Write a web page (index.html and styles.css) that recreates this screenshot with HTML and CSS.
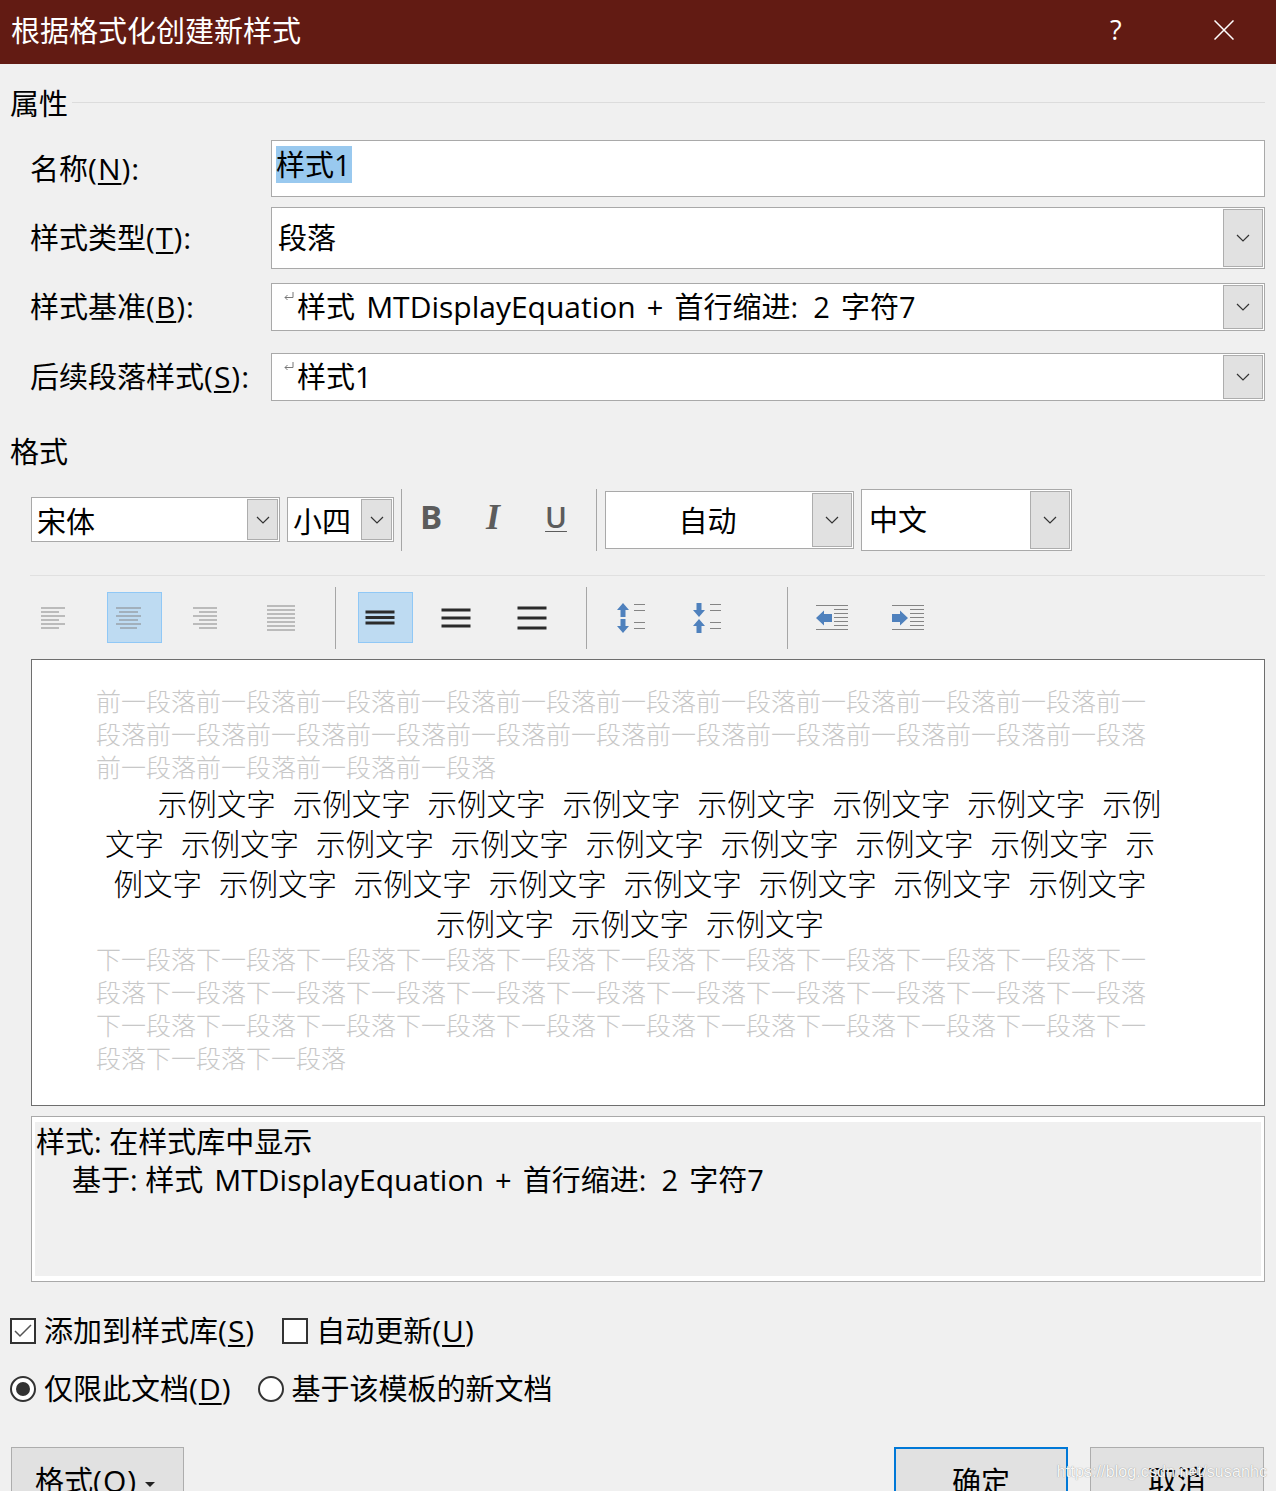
FILE: index.html
```html
<!DOCTYPE html>
<html lang="zh">
<head>
<meta charset="utf-8">
<title>根据格式化创建新样式</title>
<link rel="stylesheet" href="styles.css">
</head>
<body>
<div class="dialog">
  <header class="titlebar">
    <span class="title">根据格式化创建新样式</span>
    <span class="help">?</span>
    <svg class="close" width="20" height="20" viewBox="0 0 20 20"><path d="M.5.5 19.500 19.500M19.500.5.5 19.500" stroke="#fff" stroke-width="1.500" fill="none"/></svg>
  </header>

  <div class="section-head first"><span>属性</span><i></i></div>

  <div class="form">
    <div class="row r1"><label>名称<span class="lat">(<u>N</u>):</span></label>
      <div class="field name"><span class="sel">样式1</span></div></div>
    <div class="row r2"><label>样式类型<span class="lat">(<u>T</u>):</span></label>
      <div class="field combo"><span class="val v-plain">段落</span><b class="drop"><svg class="chev" viewBox="0 0 14 8"><path d="M1 1l6 6 6-6"/></svg></b></div></div>
    <div class="row r3"><label>样式基准<span class="lat">(<u>B</u>):</span></label>
      <div class="field combo"><svg class="para" width="10" height="9" viewBox="0 0 10 9"><path d="M9 0v5.500H1M3.500 3 1 5.500 3.500 8"/></svg><span class="val"><span class="eq">样式 <span class="eqname">MTDisplayEquation</span> + </span>首行缩进:&nbsp; <span class="eq">2 </span>字符7</span><b class="drop"><svg class="chev" viewBox="0 0 14 8"><path d="M1 1l6 6 6-6"/></svg></b></div></div>
    <div class="row r4"><label>后续段落样式<span class="lat">(<u>S</u>):</span></label>
      <div class="field combo"><svg class="para" width="10" height="9" viewBox="0 0 10 9"><path d="M9 0v5.500H1M3.500 3 1 5.500 3.500 8"/></svg><span class="val">样式1</span><b class="drop"><svg class="chev" viewBox="0 0 14 8"><path d="M1 1l6 6 6-6"/></svg></b></div></div>
  </div>

  <div class="section-head second"><span>格式</span></div>

  <div class="fontbar">
    <div class="field small font"><span class="val">宋体</span><b class="drop"><svg class="chev" viewBox="0 0 14 8"><path d="M1 1l6 6 6-6"/></svg></b></div>
    <div class="field small size"><span class="val">小四</span><b class="drop"><svg class="chev" viewBox="0 0 14 8"><path d="M1 1l6 6 6-6"/></svg></b></div>
    <i class="vsep s1"></i>
    <span class="fmt bold">B</span>
    <span class="fmt ital">I</span>
    <span class="fmt und">U</span>
    <i class="vsep s2"></i>
    <div class="field color"><span class="val center">自动</span><b class="drop"><svg class="chev" viewBox="0 0 14 8"><path d="M1 1l6 6 6-6"/></svg></b></div>
    <div class="field lang"><span class="val">中文</span><b class="drop"><svg class="chev" viewBox="0 0 14 8"><path d="M1 1l6 6 6-6"/></svg></b></div>
  </div>

  <div class="parabar">
    <span class="tool"><svg width="24" height="22" viewBox="0 0 24 22"><path d="M0 1h24M0 5h18M0 9h24M0 13h18M0 17h24M0 21h18"/></svg></span>
    <span class="tool on"><svg width="25" height="22" viewBox="0 0 25 22"><path d="M0 1h25M3 5h19M0 9h25M3 13h19M0 17h25M4 21h17"/></svg></span>
    <span class="tool"><svg width="24" height="22" viewBox="0 0 24 22"><path d="M0 1h24M6 5h18M0 9h24M6 13h18M0 17h24M6 21h18"/></svg></span>
    <span class="tool"><svg width="28" height="26" viewBox="0 0 28 26"><path d="M0 1h28M0 5h28M0 9h28M0 13h28M0 17h28M0 21h28M0 25h28"/></svg></span>
    <i class="vsep b1"></i>
    <span class="tool on"><svg width="30" height="15" viewBox="0 0 30 15"><path class="thick" d="M.5 2h29M.5 7.500h29M.5 13h29"/></svg></span>
    <span class="tool"><svg width="30" height="20" viewBox="0 0 30 20"><path class="thick" d="M.5 2h29M.5 10h29M.5 18h29"/></svg></span>
    <span class="tool"><svg width="30" height="24" viewBox="0 0 30 24"><path class="thick" d="M.5 2h29M.5 12h29M.5 22h29"/></svg></span>
    <i class="vsep b2"></i>
    <span class="tool"><svg width="28" height="30" viewBox="0 0 28 30"><path class="blue" d="M6 0l6 7H8.500v7h-5V7H0zM3.500 16h5v7H12l-6 7-6-7h3.500z"/><path d="M17 1.500h11M17 7.500h11M17 19.500h11M17 25.500h11"/></svg></span>
    <span class="tool"><svg width="28" height="30" viewBox="0 0 28 30"><path class="blue" d="M3.500 0h5v7H12l-6 7-6-7h3.500zM6 16l6 7H8.500v7h-5v-7H0z"/><path d="M17 1.500h11M17 7.500h11M17 19.500h11M17 25.500h11"/></svg></span>
    <i class="vsep b3"></i>
    <span class="tool"><svg width="32" height="25" viewBox="0 0 32 25"><path class="blue" d="M0 13l8-7.500V9h8v8H8v3.500z"/><path d="M0 .5h32M18 4.500h14M18 8.500h14M18 12.500h14M18 16.500h14M18 20.500h14M0 24.500h32"/></svg></span>
    <span class="tool"><svg width="32" height="25" viewBox="0 0 32 25"><path class="blue" d="M16 13L8 5.500V9H0v8h8v3.500z"/><path d="M0 .5h32M18 4.500h14M18 8.500h14M18 12.500h14M18 16.500h14M18 20.500h14M0 24.500h32"/></svg></span>
  </div>

  <div class="preview">
    <p class="ghost">前一段落前一段落前一段落前一段落前一段落前一段落前一段落前一段落前一段落前一段落前一<br>段落前一段落前一段落前一段落前一段落前一段落前一段落前一段落前一段落前一段落前一段落<br>前一段落前一段落前一段落前一段落</p>
    <p class="sample"><span class="l1">示例文字&nbsp;示例文字&nbsp;示例文字&nbsp;示例文字&nbsp;示例文字&nbsp;示例文字&nbsp;示例文字&nbsp;示例</span><br>文字&nbsp;示例文字&nbsp;示例文字&nbsp;示例文字&nbsp;示例文字&nbsp;示例文字&nbsp;示例文字&nbsp;示例文字&nbsp;示<br>例文字&nbsp;示例文字&nbsp;示例文字&nbsp;示例文字&nbsp;示例文字&nbsp;示例文字&nbsp;示例文字&nbsp;示例文字<br>示例文字&nbsp;示例文字&nbsp;示例文字</p>
    <p class="ghost after">下一段落下一段落下一段落下一段落下一段落下一段落下一段落下一段落下一段落下一段落下一<br>段落下一段落下一段落下一段落下一段落下一段落下一段落下一段落下一段落下一段落下一段落<br>下一段落下一段落下一段落下一段落下一段落下一段落下一段落下一段落下一段落下一段落下一<br>段落下一段落下一段落</p>
  </div>

  <div class="desc">
    <div class="desc-inner">
      <div>样式: 在样式库中显示</div>
      <div class="indent"><span>基于: </span><span class="eq">样式 <span class="eqname">MTDisplayEquation</span> + </span>首行缩进:&nbsp; <span class="eq">2 </span>字符7</div>
    </div>
  </div>

  <div class="checks">
    <span class="box"><svg width="18" height="14" viewBox="0 0 18 14"><path d="M1 7l5 5L17 1"/></svg></span>
    <span class="c-label">添加到样式库<span class="lat">(<u>S</u>)</span></span>
    <span class="box second-box"></span>
    <span class="c-label">自动更新<span class="lat">(<u>U</u>)</span></span>
  </div>
  <div class="radios">
    <span class="radio checked"></span>
    <span class="c-label">仅限此文档<span class="lat">(<u>D</u>)</span></span>
    <span class="radio second-radio"></span>
    <span class="c-label">基于该模板的新文档</span>
  </div>

  <div class="actions">
    <div class="btn format">格式<span class="lat">(<u>O</u>)</span><i class="caret"></i></div>
    <div class="btn ok">确定</div>
    <div class="btn cancel">取消</div>
    <span class="mark">https://blog.csdn.net/susanhc</span>
  </div>
</div>
</body>
</html>
```
FILE: styles.css
```css
* { box-sizing: border-box; }
html, body { margin: 0; padding: 0; }
body { width: 1276px; height: 1491px; overflow: hidden; background: #f0f0f0; }
.dialog {
  position: relative;
  width: 1276px; height: 1491px; overflow: hidden;
  background: #f0f0f0; color: #000;
  font-family: "Open Sans", "Noto Sans CJK SC", sans-serif;
  font-size: 29px;
  line-height: 38px;
}
u { text-decoration-thickness: 2px; text-underline-offset: 3px; }
.lat { font-size: 30px; letter-spacing: 1px; }
.eq { word-spacing: 3.600px; }
.eqname { font-size: 30px; }

.titlebar {
  height: 64px; background: #621b13; color: #fff;
  display: flex; align-items: center; padding-left: 11px;
}
.title { flex: 1; padding-bottom: 2px; }
.help { width: 14px; margin-right: 90px; font-size: 27px; padding-bottom: 4px; }
.close { margin: 0 42px 4px 0; }

.section-head { display: flex; align-items: center; padding-left: 10px; }
.section-head span { margin-right: 4px; padding-top: 4px; }
.section-head i { flex: 1; height: 1px; background: #dcdcdc; margin-right: 11px; }
.section-head.first { margin-top: 19px; height: 38px; }
.section-head.second { margin-top: 30px; height: 38px; }

.form { margin-top: 19px; padding-right: 11px; }
.row { display: flex; align-items: center; }
.row label { width: 271px; padding-left: 30px; flex: none; }
.r1 { height: 57px; }
.r2 { height: 62px; margin-top: 10px; }
.r3 { height: 48px; margin-top: 14px; }
.r4 { height: 48px; margin-top: 22px; }

.field {
  position: relative; flex: 1; height: 100%;
  display: flex; align-items: center;
  background: #fff; border: 1px solid #a9a9a9;
}
.field.name { padding-left: 4px; align-items: flex-start; }
.sel { background: #99c9ef; height: 37px; line-height: 37px; margin-top: 5px; padding-right: 1px; }
.val { white-space: pre; }
.v-plain { margin-left: 6px; }
.para { fill: none; stroke: #777; stroke-width: 1; align-self: flex-start; margin: 8px 3px 0 12px; flex: none; }
.drop {
  position: absolute; right: 1px; top: 1px; bottom: 1px; width: 40px;
  background: #e1e1e1; border: 1px solid #adadad;
  display: flex; align-items: center; justify-content: center;
  font-weight: normal;
}
.chev { width: 14px; height: 8px; fill: none; stroke: #333; stroke-width: 1.200; }

.fontbar { height: 64px; margin-top: 21px; padding-left: 31px; display: flex; align-items: flex-start; }
.field.small { flex: none; height: 45px; margin-top: 7px; padding-left: 5px; }
.small .val { padding-top: 4px; }
.font { width: 249px; }
.size { width: 107px; margin-left: 7px; }
.small .drop { width: 31px; }
.vsep { display: block; width: 1px; height: 62px; background: #a6a6a6; flex: none; }
.s1, .s2 { margin-top: -1px; }
.s1 { margin-left: 7px; }
.s2 { margin-left: 10px; }
.fmt { color: #5c5c5c; text-align: center; line-height: 38px; margin-top: 8px; flex: none; font-weight: 700; }
.bold { width: 58px; font-size: 33px; }
.ital { width: 66px; font-family: "Liberation Serif", serif; font-size: 36px; font-style: italic; }
.und { width: 60px; font-size: 29.500px; font-weight: 600; text-decoration: underline; text-decoration-thickness: 1px; text-underline-offset: 3px; }
.color { flex: none; width: 249px; height: 58px; margin: 1px 0 0 8px; }
.val.center { width: 203px; text-align: center; padding-top: 2px; }
.lang { flex: none; width: 211px; height: 62px; margin: -1px 0 0 7px; padding-left: 7px; }

.parabar {
  height: 84px; margin: 21px 11px 0 30px; padding-left: 1px;
  border-top: 1px solid #e0e0e0;
  display: flex; align-items: flex-start;
}
.tool {
  width: 55px; height: 51px; margin: 16px 21px 0 0;
  display: flex; align-items: center; justify-content: center;
  border: 1px solid transparent; flex: none;
}
.tool.on { background: #bedbf2; border-color: #90c8f6; }
.tool svg { fill: none; stroke: #858585; stroke-width: 1.200; margin-right: 12px; flex: none; }
.tool svg .thick { stroke: #2b2b2b; stroke-width: 3; }
.tool svg .blue { fill: #4f81bd; stroke: none; }
.b1, .b2, .b3 { margin: 11px 22px 0 0; }
.b3 { margin-left: 26px; }

.preview {
  margin: 0 11px 0 31px; height: 447px;
  background: #fff; border: 1px solid #6e6e6e;
  padding: 24px 0 0 64px;
  overflow: hidden;
  white-space: nowrap;
  font-family: "Noto Sans CJK SC", sans-serif;
}
.preview p { margin: 0; }
.ghost { font-size: 25px; line-height: 33px; color: #c8c8c8; font-weight: 300; }
.preview .sample { font-size: 29.500px; line-height: 40px; text-align: center; width: 1078px; margin: -1px 0 0 -5px; word-spacing: 10.400px; font-weight: 300; }
.l1 { padding-left: 59px; }
.preview .after { margin-top: 0; }

.desc {
  margin: 10px 11px 0 31px; height: 166px;
  border: 1px solid #a9a9a9; padding: 5px 3px;
  background: #fff;
}
.desc-inner { background: #f0f0f0; height: 100%; padding: 1px 0 0 1px; line-height: 38px; }
.indent { padding-left: 36px; }

.checks, .radios { display: flex; align-items: center; padding-left: 10px; height: 38px; }
.checks { margin-top: 30px; }
.radios { margin-top: 20px; }
.c-label { margin-left: 8px; }
.box {
  width: 26px; height: 26px; background: #fff; border: 2px solid #333; flex: none;
  display: flex; align-items: center; justify-content: center;
}
.box svg { fill: none; stroke: #555; stroke-width: 1.500; }
.second-box { margin-left: 27px; }
.radio { width: 26px; height: 26px; border-radius: 50%; background: #fff; border: 2px solid #333; flex: none; position: relative; }
.radio.checked::after { content: ""; position: absolute; left: 4px; top: 4px; width: 14px; height: 14px; border-radius: 50%; background: #333; }
.second-radio { margin-left: 26px; }

.actions { position: relative; display: flex; margin-top: 39px; padding-left: 11px; }
.btn {
  width: 174px; height: 60px; background: #e1e1e1; border: 1px solid #adadad;
  padding-top: 14px; text-align: center; flex: none;
}
.format { width: 173px; text-align: left; padding-left: 23px; }
.caret { display: inline-block; width: 0; height: 0; border: 5px solid transparent; border-top: 5px solid #222; border-bottom: 0; margin-left: 8px; vertical-align: 5px; }
.ok { margin-left: 710px; border: 2px solid #0078d7; }
.cancel { margin-left: 22px; }
.mark { position: absolute; right: 9px; top: 13px; font-family: "Liberation Sans", sans-serif; font-size: 16px; letter-spacing: .1px; line-height: 24px; color: rgba(255,255,255,.95); text-shadow: 0 0 1px rgba(110,110,110,.85); }
```
